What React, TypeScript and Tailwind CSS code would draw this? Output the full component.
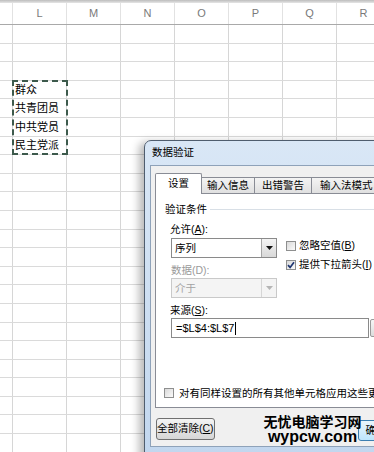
import React from 'react';

const cols = ['L', 'M', 'N', 'O', 'P', 'Q', 'R'];
const rows = Array.from({ length: 23 }, (_, i) => i + 1);
const cells: Record<number, string> = { 4: '群众', 5: '共青团员', 6: '中共党员', 7: '民主党派' };

function CheckBox({ checked }: { checked?: boolean }) {
  return (
    <span className="w-[10px] h-[10px] shrink-0 border border-[#8e8f8f] bg-gradient-to-br from-[#d9d9d9] to-[#fbfbfb] flex items-center justify-center">
      {checked && (
        <svg width="8" height="8" viewBox="0 0 8 8">
          <path d="M1 4.2 L3.1 6.4 L7 1.2" fill="none" stroke="#1e3570" strokeWidth="1.7" />
        </svg>
      )}
    </span>
  );
}

function Combo({ value, disabled }: { value: string; disabled?: boolean }) {
  return (
    <div
      className={`h-[20px] flex items-center border ${
        disabled ? 'border-[#c9c9c9] bg-[#f4f4f4] text-[#a3a3a3]' : 'border-[#8a8a8a] bg-white text-black'
      }`}
    >
      <span className="flex-1 pl-[3px] leading-[14px]">{value}</span>
      <span
        className={`w-[15px] h-[18px] flex items-center justify-center border-l ${
          disabled ? 'border-[#d6d6d6] bg-[#f4f4f4]' : 'border-[#a6a6a6] bg-gradient-to-b from-[#f4f4f4] to-[#d9d9d9]'
        }`}
      >
        <svg width="7" height="4" viewBox="0 0 7 4">
          <path d="M0 0 H7 L3.5 4 Z" fill={disabled ? '#b5b5b5' : '#111'} />
        </svg>
      </span>
    </div>
  );
}

function Sheet() {
  return (
    <div className="flex flex-col">
      <div className="h-[3px] bg-gradient-to-b from-[#bdbdbd] to-[#e6e6e6]" />
      <div className="flex h-[22px] border-b border-[#a9a9a9] bg-white">
        <div className="w-[13px] shrink-0 border-r border-[#e2e2e2]" />
        {cols.map((c) => (
          <div
            key={c}
            className="w-[54px] shrink-0 border-r border-[#e2e2e2] flex items-center justify-center text-[11px] text-[#7a7a7a]"
          >
            {c}
          </div>
        ))}
      </div>
      {rows.map((r) => (
        <div key={r} className="flex h-[18.6px] border-b border-[#dadada]">
          <div className="w-[13px] shrink-0 border-r border-[#d6d6d6]" />
          {cols.map((c, i) => (
            <div key={c} className="w-[54px] shrink-0 border-r border-[#d6d6d6] flex items-center pl-[2px] text-[11px] leading-[14px] text-black">
              {i === 0 ? cells[r] : ''}
            </div>
          ))}
        </div>
      ))}
    </div>
  );
}

export default function App() {
  return (
    <div className="relative w-[374px] h-[452px] overflow-hidden bg-white font-['Liberation_Sans','Noto_Sans_CJK_SC',sans-serif] text-[10.5px]">
      <Sheet />

      {/* copy marquee around L4:L7 */}
      <div className="absolute left-[12px] top-[80px] w-[56px] h-[75px] border-2 border-dashed border-[#3d5a4c]" />

      {/* Data validation dialog */}
      <div className="absolute left-[144px] top-[140px] w-[250px] h-[330px] rounded-t-[7px] border border-[#4f5d6e] bg-gradient-to-b from-[#d9e7f6] to-[#c1d6ee] shadow-[-5px_2px_9px_rgba(0,0,0,0.28)] flex flex-col">
        <div className="h-[24px] flex items-center pl-[7px] text-black">数据验证</div>

        <div className="ml-[5px] h-[282px] bg-[#f0f0f0] border-l border-t border-b border-[#8ea2b9] pl-[4px] pt-[7px] flex flex-col">
          {/* tabs */}
          <div className="relative z-10 flex items-end h-[21px]">
            <div className="w-[47px] h-[21px] border border-b-0 border-[#898c95] bg-white rounded-t-[2px] flex items-center justify-center">
              设置
            </div>
            <div className="w-[53px] h-[16px] mb-[1px] border-t border-r border-[#898c95] bg-gradient-to-b from-[#f4f4f4] to-[#e0e0e0] flex items-center justify-center">
              输入信息
            </div>
            <div className="w-[57px] h-[16px] mb-[1px] border-t border-r border-[#898c95] bg-gradient-to-b from-[#f4f4f4] to-[#e0e0e0] flex items-center justify-center">
              出错警告
            </div>
            <div className="w-[66px] h-[16px] mb-[1px] border-t border-r border-[#898c95] bg-gradient-to-b from-[#f4f4f4] to-[#e0e0e0] flex items-center pl-[8px]">
              输入法模式
            </div>
          </div>

          {/* tab body */}
          <div className="mt-[-1px] h-[215px] border border-[#898c95] bg-white pl-[9px] pt-[8px] flex flex-col">
            <div className="flex items-center h-[14px]">
              <span className="leading-[14px]">验证条件</span>
              <span className="flex-1 h-px bg-[#d8dfe6] ml-[3px]" />
            </div>

            <div className="pl-[5px] flex flex-col">
              <div className="mt-[6px] h-[14px] leading-[14px]">
                允许(<u>A</u>):
              </div>
              <div className="mt-[2px] flex">
                <div className="w-[106px] ml-[1px] flex flex-col">
                  <Combo value="序列" />
                  <div className="mt-[5px] h-[14px] leading-[14px] text-[#9a9a9a]">数据(D):</div>
                  <div className="mt-[1px]">
                    <Combo value="介于" disabled />
                  </div>
                </div>
                <div className="ml-[9px] mt-[-2px] flex flex-col">
                  <div className="h-[19px] flex items-center gap-[3px] whitespace-nowrap">
                    <CheckBox />
                    <span>
                      忽略空值(<u>B</u>)
                    </span>
                  </div>
                  <div className="h-[19px] flex items-center gap-[3px] whitespace-nowrap">
                    <CheckBox checked />
                    <span>
                      提供下拉箭头(<u>I</u>)
                    </span>
                  </div>
                </div>
              </div>

              <div className="mt-[5px] h-[14px] leading-[14px]">
                来源(<u>S</u>):
              </div>
              <div className="mt-[1px] flex items-center">
                <div className="w-[198px] ml-[1px] h-[20px] border border-[#8a8a8a] bg-white flex items-center pl-[4px] text-[11px] text-black">
                  =$L$4:$L$7
                  <span className="w-px h-[13px] bg-black ml-[1px]" />
                </div>
                <div className="w-[12px] h-[18px] ml-[1px] border border-[#9a9a9a] rounded-[2px] bg-gradient-to-b from-[#f6f6f6] to-[#dcdcdc]" />
              </div>
            </div>

            <div className="mt-[48px] ml-[-1px] h-[14px] flex items-center gap-[5px] whitespace-nowrap">
              <CheckBox />
              <span className="leading-[14px]">对有同样设置的所有其他单元格应用这些更改</span>
            </div>
          </div>

          {/* buttons */}
          <div className="mt-[10px] flex items-start">
            <div className="ml-[1px] w-[68px] h-[22px] rounded-[3px] border border-[#707070] bg-gradient-to-b from-[#f4f4f4] to-[#d6d6d6] flex items-center justify-center whitespace-nowrap">
              全部清除(<u>C</u>)
            </div>
            <div className="ml-[143px] mt-[2px] w-[70px] h-[21px] rounded-[3px] border border-[#3c7fb1] bg-gradient-to-b from-[#eaf6fd] to-[#bee6fd] flex items-center pl-[7px] whitespace-nowrap">
              确定
            </div>
          </div>
        </div>
      </div>

      {/* watermark */}
      <div className="absolute left-[262px] top-[413px] w-[101px] flex flex-col items-center text-black font-bold">
        <span className="text-[14px] leading-[16px] font-['Noto_Sans_CJK_SC',sans-serif]">无忧电脑学习网</span>
        <span className="text-[16px] leading-[16px] font-['Liberation_Sans',sans-serif]">wypcw.com</span>
      </div>
    </div>
  );
}
